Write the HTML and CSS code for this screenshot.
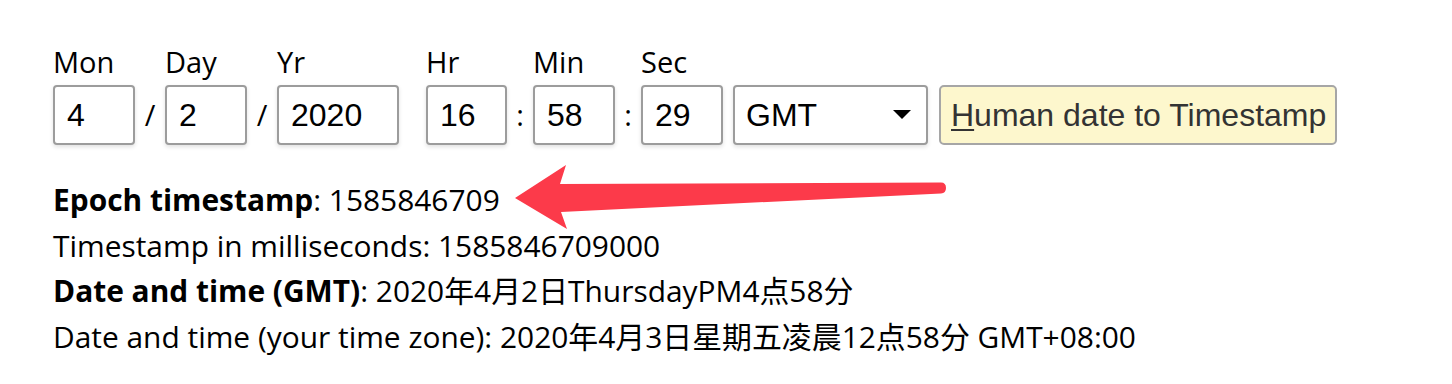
FILE: index.html
```html
<!DOCTYPE html>
<html>
<head>
<meta charset="utf-8">
<link rel="stylesheet" href="styles.css">
</head>
<body>
<div class="page">
  <div class="form">
    <div class="field"><label class="lbl">Mon</label><input class="inp w82" value="4"></div>
    <span class="sep slash">/</span>
    <div class="field"><label class="lbl">Day</label><input class="inp w82" value="2"></div>
    <span class="sep slash">/</span>
    <div class="field"><label class="lbl">Yr</label><input class="inp w122" value="2020"></div>
    <span class="gap27"></span>
    <div class="field"><label class="lbl">Hr</label><input class="inp w81" value="16"></div>
    <span class="sep colon">:</span>
    <div class="field"><label class="lbl">Min</label><input class="inp w82" value="58"></div>
    <span class="sep colon">:</span>
    <div class="field"><label class="lbl">Sec</label><input class="inp w82" value="29"></div>
    <div class="select">
      <span>GMT</span>
      <svg class="caret" width="18" height="10" viewBox="0 0 18 10"><path d="M0 0 L18 0 L9 9 Z" fill="#000"/></svg>
    </div>
    <button class="btn"><u>H</u>uman date to Timestamp</button>
  </div>
  <div class="results">
    <div class="line"><b>Epoch timestamp</b>: 1585846709</div>
    <div class="line">Timestamp in milliseconds: 1585846709000</div>
    <div class="line"><b>Date and time (GMT)</b>: 2020年4月2日ThursdayPM4点58分</div>
    <div class="line">Date and time (your time zone): 2020年4月3日星期五凌晨12点58分 GMT+08:00</div>
  </div>
  <svg class="arrow" width="1452" height="384" viewBox="0 0 1452 384">
    <path d="M515 198 L566 165 L560 184 L941 182.5 Q946 182.5 946 188 Q946 193 941 193.5 L561 212 L567 229 Z" fill="#fc3a4a"/>
  </svg>
</div>
</body>
</html>
```

FILE: styles.css
```css
html, body {
  margin: 0;
  padding: 0;
  background: #fff;
}
.page {
  position: relative;
  width: 1452px;
  height: 384px;
  padding: 45px 0 0 53px;
  box-sizing: border-box;
  font-family: "Open Sans", "Noto Sans", "Noto Sans CJK SC", sans-serif;
  color: #000;
}
.form {
  display: flex;
  align-items: flex-end;
}
.field {
  display: flex;
  flex-direction: column;
}
.lbl {
  font-size: 29px;
  line-height: 34px;
  height: 40px;
}
.inp {
  box-sizing: border-box;
  height: 60px;
  border: 2px solid #9c9c9c;
  border-radius: 4px;
  padding: 0 0 0 12px;
  margin: 0;
  font-family: "Liberation Sans", Arial, sans-serif;
  font-size: 32px;
  color: #000;
  background: #fff;
  box-shadow: 0 2px 4px rgba(0,0,0,0.12);
  outline: none;
}
.w82 { width: 82px; }
.w81 { width: 81px; }
.w122 { width: 122px; }
.sep {
  height: 60px;
  line-height: 60px;
  font-size: 29px;
  text-align: center;
}
.slash { width: 30px; }
.colon { width: 26px; }
.gap27 { width: 27px; }
.select {
  box-sizing: border-box;
  width: 195px;
  height: 60px;
  margin-left: 10px;
  border: 2px solid #9c9c9c;
  border-radius: 4px;
  background: #fff;
  box-shadow: 0 2px 4px rgba(0,0,0,0.12);
  display: flex;
  align-items: center;
  justify-content: space-between;
  padding: 0 15px 0 11px;
  font-family: "Liberation Sans", Arial, sans-serif;
  font-size: 32px;
}
.caret { display: block; }
.btn {
  box-sizing: border-box;
  height: 60px;
  width: 398px;
  margin-left: 11px;
  border: 2px solid #a6a6a6;
  border-radius: 5px;
  background: #fdf7cd;
  font-family: "Liberation Sans", Arial, sans-serif;
  font-size: 32px;
  color: #333;
  padding: 0 0 0 10px;
  text-align: left;
}
.btn u {
  text-decoration-thickness: 2px;
  text-underline-offset: 3px;
}
.results {
  margin-top: 32px;
}
.line {
  font-size: 29.9px;
  line-height: 45.5px;
  white-space: nowrap;
}
.arrow {
  position: absolute;
  left: 0;
  top: 0;
  pointer-events: none;
}
```
